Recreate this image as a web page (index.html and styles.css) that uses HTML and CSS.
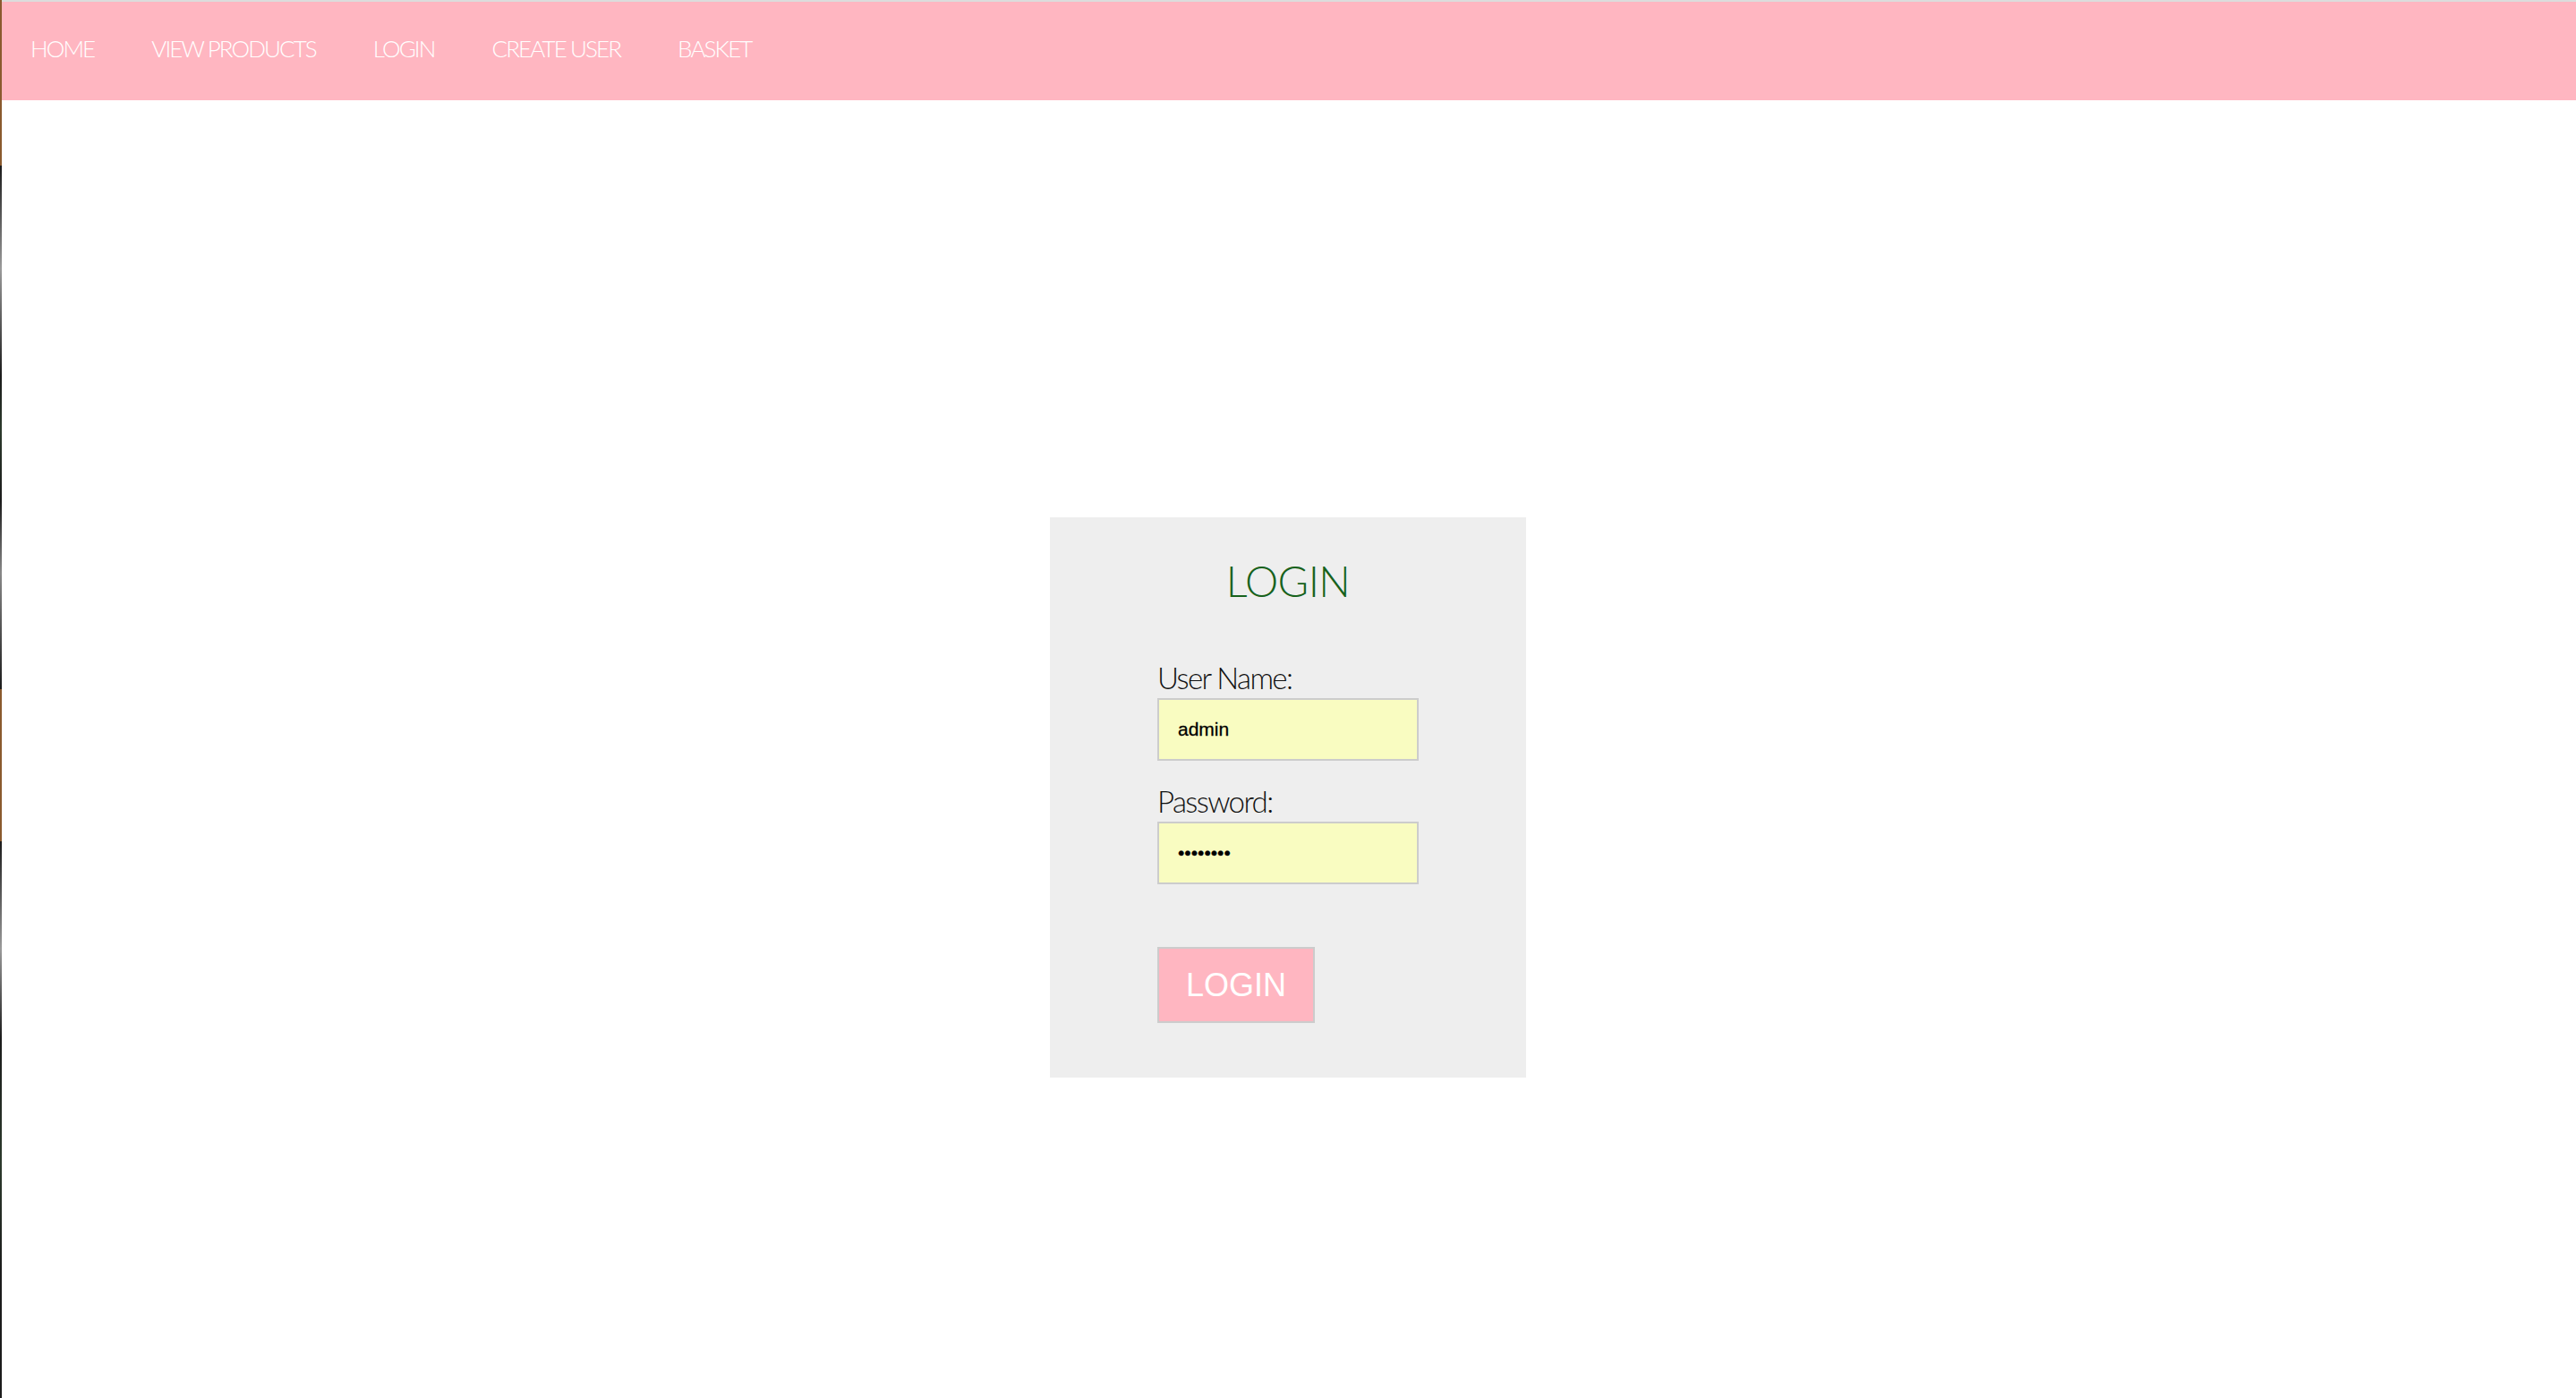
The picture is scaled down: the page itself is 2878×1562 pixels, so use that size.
FILE: index.html
```html
<!DOCTYPE html>
<html lang="en">
<head>
<meta charset="utf-8">
<title>Login</title>
<link rel="stylesheet" href="styles.css">
</head>
<body>
<div class="window">
  <div class="edge"></div>
  <div class="main">
    <div class="topline"></div>
    <nav class="nav">
      <a class="nav-link" href="#">HOME</a>
      <a class="nav-link" href="#">VIEW PRODUCTS</a>
      <a class="nav-link" href="#">LOGIN</a>
      <a class="nav-link" href="#">CREATE USER</a>
      <a class="nav-link" href="#">BASKET</a>
    </nav>
    <div class="content">
      <form class="login-box">
        <h1 class="login-title">LOGIN</h1>
        <div class="fields">
          <label class="field-label" for="user">User Name:</label>
          <input class="field-input" id="user" type="text" value="admin">
          <label class="field-label second" for="pass">Password:</label>
          <input class="field-input" id="pass" type="password" value="password">
          <button class="login-btn" type="button">LOGIN</button>
        </div>
      </form>
    </div>
  </div>
</div>
</body>
</html>
```

FILE: styles.css
```css
html, body {
  margin: 0;
  padding: 0;
  background: #ffffff;
}

.window {
  display: flex;
  height: 1562px;
  overflow: hidden;
}

.edge {
  width: 2px;
  flex: 0 0 2px;
  background: linear-gradient(to bottom,
    #8a5a2e 0px, #8a5a2e 185px,
    #1b1b1b 185px, #9a9a9a 300px, #1b1b1b 420px, #2c3a2c 480px, #1b1b1b 560px, #888 640px, #1b1b1b 770px,
    #8a5a2e 770px, #8a5a2e 940px,
    #1b1b1b 940px, #9a9a9a 1060px, #1b1b1b 1160px, #2c3a2c 1300px, #1b1b1b 1420px, #1b1b1b 1562px);
}

.main {
  flex: 1 1 auto;
  display: flex;
  flex-direction: column;
}

.topline {
  height: 2px;
  background: #dcdcdc;
}

.nav {
  box-sizing: border-box;
  height: 110px;
  background: #ffb6c1;
  display: flex;
  align-items: flex-start;
  padding: 39px 0 0 0;
}

.nav-link {
  font-family: Lato, "Open Sans", sans-serif;
  font-weight: 300;
  font-size: 26px;
  line-height: 26px;
  letter-spacing: -1.9px;
  color: #ffffff;
  text-decoration: none;
  padding: 0 32px;
}

.content {
  display: flex;
  justify-content: center;
  padding-top: 466px;
}

.login-box {
  box-sizing: border-box;
  width: 532px;
  height: 626px;
  background: #eeeeee;
  padding: 48px 0 0 0;
  display: flex;
  flex-direction: column;
  align-items: center;
  margin-right: 2px;
}

.login-title {
  margin: 0;
  font-family: Lato, "Open Sans", sans-serif;
  font-weight: 300;
  font-size: 47px;
  line-height: 47px;
  color: #17621c;
  letter-spacing: -0.5px;
}

.fields {
  width: 292px;
  display: flex;
  flex-direction: column;
  align-items: flex-start;
  margin-top: 68px;
}

.field-label {
  font-family: Lato, "Open Sans", sans-serif;
  font-weight: 300;
  font-size: 33px;
  line-height: 33px;
  color: #111111;
  letter-spacing: -1.6px;
  margin-bottom: 6px;
}

.field-label.second {
  margin-top: 29px;
}

.field-input {
  box-sizing: border-box;
  width: 292px;
  height: 70px;
  margin: 0;
  border: 2px solid #cccccc;
  background: #f9fcc1;
  padding: 0 0 0 21px;
  font-family: "Liberation Sans", Arial, sans-serif;
  font-size: 21px;
  color: #000000;
  outline: none;
  -webkit-text-stroke: 0.3px #000000;
}

.login-btn {
  box-sizing: border-box;
  margin-top: 70px;
  width: 176px;
  height: 85px;
  border: 2px solid #cccccc;
  background: #ffb6c1;
  color: #ffffff;
  font-family: "Liberation Sans", Arial, sans-serif;
  font-size: 36px;
  padding: 0;
  cursor: pointer;
}
```
